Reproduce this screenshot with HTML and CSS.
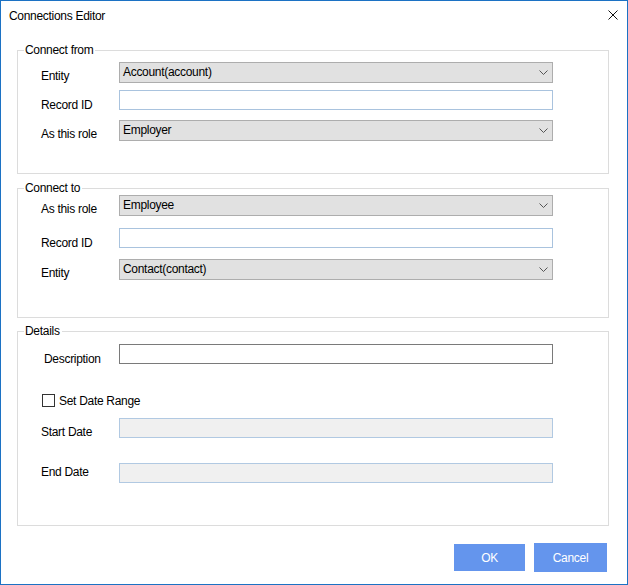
FILE: index.html
```html
<!DOCTYPE html>
<html>
<head>
<meta charset="utf-8">
<title>Connections Editor</title>
<link rel="stylesheet" href="styles.css">
</head>
<body>
<div class="window">
  <div class="titlebar">
    <span class="title">Connections Editor</span>
    <svg class="close" width="10" height="10" viewBox="0 0 10 10"><path d="M0.5 0.5 L9.5 9.5 M9.5 0.5 L0.5 9.5" stroke="#111" stroke-width="1" fill="none"/></svg>
  </div>
  <div class="content">
    <fieldset class="group g1">
      <legend>Connect from</legend>
      <div class="rows">
        <div class="row">
          <span class="label">Entity</span>
          <div class="combo"><span>Account(account)</span><svg width="9" height="5" viewBox="0 0 9 5"><path d="M0.5 0.5 L4.5 4.5 L8.5 0.5" stroke="#555" fill="none"/></svg></div>
        </div>
        <div class="row r-gap7">
          <span class="label lo8">Record ID</span>
          <div class="textbox"></div>
        </div>
        <div class="row r-gap10">
          <span class="label">As this role</span>
          <div class="combo"><span>Employer</span><svg width="9" height="5" viewBox="0 0 9 5"><path d="M0.5 0.5 L4.5 4.5 L8.5 0.5" stroke="#555" fill="none"/></svg></div>
        </div>
      </div>
    </fieldset>
    <fieldset class="group g2">
      <legend>Connect to</legend>
      <div class="rows">
        <div class="row">
          <span class="label">As this role</span>
          <div class="combo"><span>Employee</span><svg width="9" height="5" viewBox="0 0 9 5"><path d="M0.5 0.5 L4.5 4.5 L8.5 0.5" stroke="#555" fill="none"/></svg></div>
        </div>
        <div class="row r-gap12">
          <span class="label lo8">Record ID</span>
          <div class="textbox"></div>
        </div>
        <div class="row r-gap11">
          <span class="label">Entity</span>
          <div class="combo"><span>Contact(contact)</span><svg width="9" height="5" viewBox="0 0 9 5"><path d="M0.5 0.5 L4.5 4.5 L8.5 0.5" stroke="#555" fill="none"/></svg></div>
        </div>
      </div>
    </fieldset>
    <fieldset class="group g3">
      <legend>Details</legend>
      <div class="rows">
        <div class="row">
          <span class="label lo8 indent">Description</span>
          <div class="textbox dark"></div>
        </div>
        <div class="check-row">
          <span class="checkbox"></span>
          <span class="check-label">Set Date Range</span>
        </div>
        <div class="row r-gap11">
          <span class="label">Start Date</span>
          <div class="textbox disabled"></div>
        </div>
        <div class="row r-gap25">
          <span class="label lo2">End Date</span>
          <div class="textbox disabled"></div>
        </div>
      </div>
    </fieldset>
    <div class="footer">
      <button class="btn ok">OK</button>
      <button class="btn cancel">Cancel</button>
    </div>
  </div>
</div>
</body>
</html>
```

FILE: styles.css
```css
* { box-sizing: border-box; }
html, body { margin: 0; padding: 0; background: #fff; }
body {
  font-family: "Liberation Sans", Arial, sans-serif;
  font-size: 12px;
  letter-spacing: -0.3px;
  color: #000;
}
.window {
  width: 628px;
  height: 585px;
  border: 1px solid #1c72c4;
  background: #fff;
}
.titlebar {
  height: 31px;
  display: flex;
  align-items: center;
  justify-content: space-between;
  padding: 0 9px 2px 8px;
}
.title { font-size: 12px; line-height: 14px; }
.close { display: block; margin-bottom: 1px; }
.content {
  padding: 11px 18px 0 16px;
}
.group {
  margin: 0;
  min-width: 0;
  border: 1px solid #dcdcdc;
  padding: 0 0 0 6px;
}
.group legend {
  padding: 0 2px 0 1px;
  line-height: 14px;
  height: 14px;
  font-size: 12px;
}
.g1 { padding-top: 5px; padding-bottom: 32px; }
.g2 { margin-top: 7px; padding-top: 0; padding-bottom: 37px; }
.g3 { margin-top: 6px; padding-top: 6px; padding-bottom: 42px; }
.rows { padding-left: 17px; }
.row {
  display: flex;
  align-items: flex-start;
}
.r-gap7 { margin-top: 7px; }
.r-gap10 { margin-top: 10px; }
.r-gap11 { margin-top: 11px; }
.r-gap12 { margin-top: 12px; }
.r-gap25 { margin-top: 25px; }
.label {
  width: 78px;
  height: 20px;
  flex: none;
  line-height: 14px;
  padding-top: 7px;
  white-space: nowrap;
}
.label.lo8 { padding-top: 8px; }
.label.lo2 { padding-top: 2px; }
.label.indent { padding-left: 3px; }
.combo {
  width: 434px;
  height: 21px;
  background: #e1e1e1;
  border: 1px solid #adadad;
  display: flex;
  align-items: center;
  justify-content: space-between;
  padding: 0 4px 1px 3px;
  line-height: 14px;
}
.combo svg { display: block; margin-top: 1px; }
.textbox {
  width: 434px;
  height: 20px;
  border: 1px solid #a9c3de;
  background: #fff;
}
.textbox.dark { border-color: #7a7a7a; }
.textbox.disabled { background: #f0f0f0; border-color: #b1c9e2; }
.check-row {
  margin-top: 30px;
  display: flex;
  align-items: center;
  height: 13px;
}
.checkbox {
  width: 13px;
  height: 13px;
  margin-left: 1px;
  border: 1px solid #333;
  background: #fff;
}
.check-label {
  margin-left: 4px;
  line-height: 14px;
}
.footer {
  margin-top: 17px;
  display: flex;
  justify-content: flex-end;
  align-items: center;
  gap: 9px;
  padding-right: 2px;
}
.btn {
  border: none;
  background: #6495ed;
  color: #fff;
  font-family: "Liberation Sans", Arial, sans-serif;
  font-size: 12px;
  letter-spacing: -0.3px;
  padding: 0;
}
.ok { width: 71px; height: 27px; }
.cancel { width: 73px; height: 29px; }
```
